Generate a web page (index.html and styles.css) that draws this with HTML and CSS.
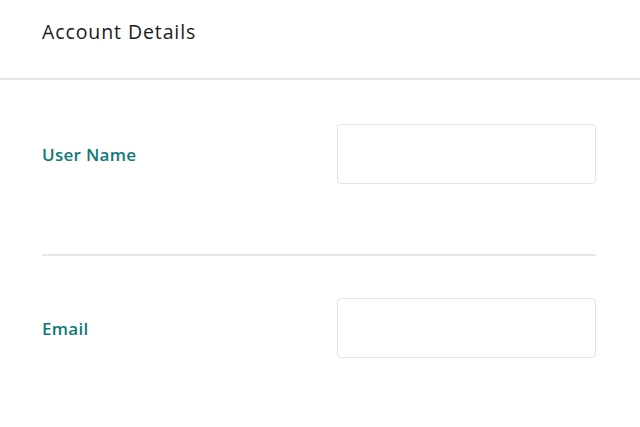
FILE: index.html
```html
<!DOCTYPE html>
<html>
<head>
<meta charset="utf-8">
<link rel="stylesheet" href="styles.css">
</head>
<body>
<div class="header">
  <h1 class="title">Account Details</h1>
</div>
<div class="form">
  <div class="row">
    <label class="label">User Name</label>
    <input class="field" type="text">
  </div>
  <div class="row">
    <label class="label">Email</label>
    <input class="field" type="text">
  </div>
</div>
</body>
</html>
```
FILE: styles.css
```css
html, body {
  margin: 0;
  padding: 0;
  background: #ffffff;
  font-family: "Open Sans", "Liberation Sans", sans-serif;
}
.header {
  height: 78px;
  border-bottom: 2px solid #e6e6e6;
  padding: 0 42px;
  display: flex;
  align-items: flex-start;
}
.title {
  margin: 20px 0 0 0;
  font-size: 19.5px;
  font-weight: 400;
  color: #1a1a1a;
  line-height: 24px;
  letter-spacing: 0.9px;
}
.form {
  padding: 0 44px 0 42px;
}
.row {
  display: flex;
  align-items: center;
  justify-content: space-between;
  padding: 44px 0 70px 0;
}
.row + .row {
  border-top: 2px solid #e6e6e6;
  padding-top: 42px;
}
.label {
  font-size: 17px;
  font-weight: 600;
  color: #0f7a76;
  letter-spacing: 0.3px;
}
.field {
  width: 259px;
  height: 60px;
  box-sizing: border-box;
  border: 1.5px solid #e3e3e3;
  border-radius: 4px;
  margin: 0;
  padding: 0 12px;
  background: #fff;
}
```
